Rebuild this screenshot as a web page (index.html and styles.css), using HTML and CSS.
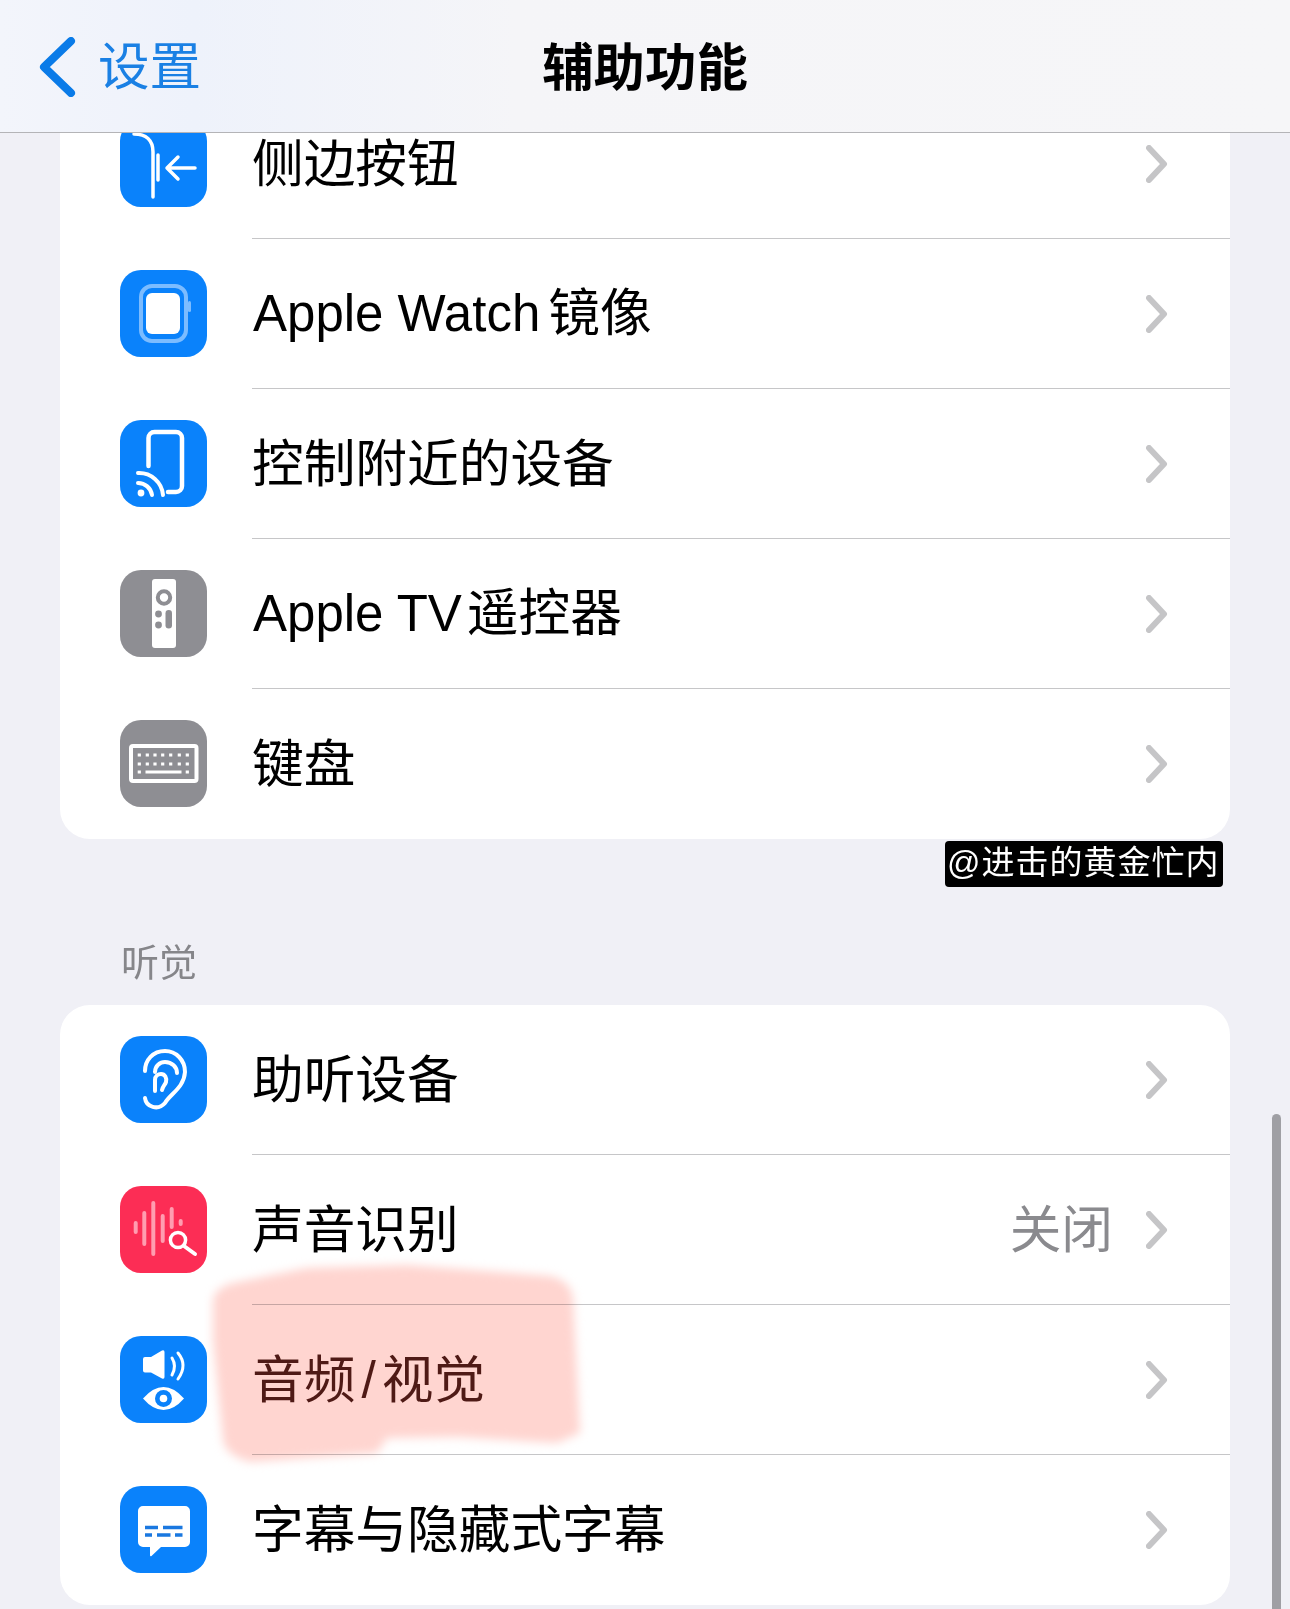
FILE: index.html
```html
<!DOCTYPE html>
<html lang="zh-CN">
<head>
<meta charset="utf-8">
<title>辅助功能</title>
<link rel="stylesheet" href="styles.css">
</head>
<body>
<div class="screen">
  <header class="nav">
    <div class="back">
      <svg class="back-chev" viewBox="0 0 40 60"><path d="M34 4 L7 30 L34 56"/></svg>
      <span class="back-label">设置</span>
    </div>
    <h1 class="title">辅助功能</h1>
  </header>

  <main class="content">
    <section class="card">
      <div class="row">
        <div class="tile blue"><svg viewBox="0 0 87 87"><g class="s-white s35"><path d="M14 14 C26 14 33 20 33 32 V77"/><path d="M38 35 V60"/><path d="M75 48 H47 M58 37 L47 48 L58 59"/></g></svg></div>
        <div class="body"><span class="label">侧边按钮</span><svg class="chev" viewBox="0 0 22 38"><path d="M3 3 L18 19 L3 35"/></svg></div>
      </div>
      <div class="row">
        <div class="tile blue"><svg viewBox="0 0 87 87"><rect x="21" y="16" width="45" height="55" rx="11" class="s-light s4"/><rect x="68" y="31" width="3" height="11" rx="1.5" class="f-light"/><rect x="26" y="23" width="34" height="41" rx="6" class="f-white"/></svg></div>
        <div class="body"><span class="label"><span class="lat">Apple Watch</span><span class="gap"></span>镜像</span><svg class="chev" viewBox="0 0 22 38"><path d="M3 3 L18 19 L3 35"/></svg></div>
      </div>
      <div class="row">
        <div class="tile blue"><svg viewBox="0 0 87 87"><path d="M28.5 46 V18 a6 6 0 0 1 6-6 H56 a6 6 0 0 1 6 6 V66 a6 6 0 0 1-6 6 H48" class="s-white s45"/><circle cx="21" cy="73" r="3.4" class="f-white"/><path d="M18 63 A14 14 0 0 1 32 75 M18 53 A24 24 0 0 1 43 75" class="s-white s4"/></svg></div>
        <div class="body"><span class="label">控制附近的设备</span><svg class="chev" viewBox="0 0 22 38"><path d="M3 3 L18 19 L3 35"/></svg></div>
      </div>
      <div class="row">
        <div class="tile grey"><svg viewBox="0 0 87 87"><rect x="32" y="9" width="24" height="69" rx="3" class="f-white"/><circle cx="44" cy="27.5" r="6.2" class="s-grey s4"/><circle cx="38.5" cy="44" r="3.4" class="f-grey"/><circle cx="38.5" cy="55" r="3.4" class="f-grey"/><rect x="45.5" y="40" width="6.5" height="18.5" rx="3.25" class="f-grey"/></svg></div>
        <div class="body"><span class="label"><span class="lat">Apple TV</span><span class="gap-s"></span>遥控器</span><svg class="chev" viewBox="0 0 22 38"><path d="M3 3 L18 19 L3 35"/></svg></div>
      </div>
      <div class="row">
        <div class="tile grey"><svg viewBox="0 0 87 87"><rect x="11" y="26" width="65.500" height="35" rx="2" class="s-white s4"/><path class="keys" d="M19.300 35h0M27.300 35h0M35 35h0M42.700 35h0M50.700 35h0M59.300 35h0M67.300 35h0M19.300 44h0M27.300 44h0M35 44h0M42.700 44h0M50.700 44h0M59.300 44h0M67.300 44h0M19.300 52h0M67.300 52h0"/><rect x="25.500" y="50.500" width="36" height="3" class="f-white"/></svg></div>
        <div class="body last"><span class="label">键盘</span><svg class="chev" viewBox="0 0 22 38"><path d="M3 3 L18 19 L3 35"/></svg></div>
      </div>
    </section>

    <h2 class="section-title">听觉</h2>

    <section class="card">
      <div class="row">
        <div class="tile blue"><svg viewBox="0 0 87 87"><g class="s-white s4"><path d="M25 62 C26 71 38 75 45 67 C50 58 64 52 65 36 C65 24 56 15 45 15 C33 15 25 24 25 35"/><path d="M35 36 C35 30 40 26 45 26 C52 26 57 31 57 37"/><path d="M35 55 V44 C35 40 38 38 41 38 C45 38 47 42 46 46 C45 49 43 50 42 54"/></g></svg></div>
        <div class="body"><span class="label">助听设备</span><svg class="chev" viewBox="0 0 22 38"><path d="M3 3 L18 19 L3 35"/></svg></div>
      </div>
      <div class="row">
        <div class="tile red"><svg viewBox="0 0 87 87"><path class="s-pink s4" d="M15.700 37V46M24.300 27V58M33.300 17V68M42.700 30V55M51.700 23V41M60.700 35V38"/><circle cx="58" cy="54" r="7.600" class="s-white s35 f-red"/><path class="s-white s4" d="M64 60 L75 68"/></svg></div>
        <div class="body"><span class="label">声音识别</span><span class="value">关闭</span><svg class="chev" viewBox="0 0 22 38"><path d="M3 3 L18 19 L3 35"/></svg></div>
      </div>
      <div class="row">
        <div class="tile blue"><svg viewBox="0 0 87 87"><path class="f-white" d="M25 21 H31 L42 14.500 Q44.500 13.500 44.500 16 V41 Q44.500 43.500 42 42.500 L31 36.500 H25 a2 2 0 0 1-2-2 V23 a2 2 0 0 1 2-2z"/><path class="s-white s3" d="M52 22 Q57 30 52 39 M58 17 Q68 29 58 43"/><path class="f-white" d="M23 62.500 Q33 51 43.500 51 Q54 51 64 62.500 Q54 74 43.500 74 Q33 74 23 62.500z"/><circle cx="43.500" cy="62.500" r="8.500" class="f-blue"/><circle cx="43.500" cy="62.500" r="3.800" class="f-white"/></svg></div>
        <div class="body"><span class="label hl">音频<span class="sl">/</span>视觉</span><svg class="chev" viewBox="0 0 22 38"><path d="M3 3 L18 19 L3 35"/></svg></div>
      </div>
      <div class="row">
        <div class="tile blue"><svg viewBox="0 0 87 87"><path class="f-white" d="M23 20 H65 a5 5 0 0 1 5 5 V56 a5 5 0 0 1-5 5 H41 L31.500 70 Q30 71 30 69 V61 H23 a5 5 0 0 1-5-5 V25 a5 5 0 0 1 5-5z"/><path class="s-cap" d="M25 41.500 H38 M43 41.500 H62.500 M25 49 H32 M37 49 H50.500 M55 49 H62.500"/></svg></div>
        <div class="body last"><span class="label">字幕与隐藏式字幕</span><svg class="chev" viewBox="0 0 22 38"><path d="M3 3 L18 19 L3 35"/></svg></div>
      </div>
    </section>
  </main>

  <div class="watermark">@进击的黄金忙内</div>
  <svg class="marker" viewBox="0 0 400 240"><path d="M23 60 Q25 48 43 43 L117 28 L217 25 L360 36 Q380 40 383 58 L390 193 L367 203 L267 197 L197 198 L187 213 L60 222 Q35 215 33 200 L23 100z"/></svg>
  <div class="scrollbar"></div>
</div>
</body>
</html>
```
FILE: styles.css
```css
* { box-sizing: border-box; }
html, body { margin: 0; padding: 0; }
body {
  background: #f0f0f6;
  font-family: "Liberation Sans", "Noto Sans CJK SC", sans-serif;
  color: #000;
}
.screen { position: relative; width: 1290px; height: 1609px; overflow: hidden; background: #f0f0f6; }

.nav {
  position: absolute; top: 0; left: 0; right: 0; height: 133px; z-index: 3;
  display: flex; align-items: center; justify-content: center;
  padding-top: 3px;
  background: linear-gradient(90deg, #f3f5fb 0%, #eef2fb 15%, #f5f5f8 40%, #f6f6f8 100%);
  border-bottom: 1px solid #b4b4b7;
}
.back { position: absolute; left: 37px; top: 37px; display: flex; align-items: center; gap: 21px; }
.back-chev { width: 40px; height: 60px; fill: none; stroke: #0a7be8; stroke-width: 8; stroke-linecap: round; stroke-linejoin: round; }
.back-label { font-size: 51.6px; line-height: 60px; color: #1a80e4; }
.title { margin: 0; font-size: 51.4px; line-height: 60px; font-weight: 700; }

.content { padding-top: 89px; }
.card { margin: 0 60px; background: #fff; border-radius: 30px; overflow: hidden; }
.section-title { margin: 0; height: 166px; padding: 97px 0 0 121px; font-size: 38px; line-height: 54px; font-weight: 400; color: #86868a; }

.row { display: flex; height: 150px; padding-left: 60px; align-items: flex-start; }
.tile { flex: none; width: 87px; height: 87px; margin-top: 31px; border-radius: 21px; }
.tile svg { display: block; width: 87px; height: 87px; }
.blue { background: #0a82fb; }
.grey { background: #8e8e93; }
.red { background: #fc2d55; }

.body {
  flex: 1; height: 150px; margin-left: 45px; padding-right: 62px;
  display: flex; align-items: center;
  border-bottom: 1px solid #c6c6c8;
}
.body.last { border-bottom: 0; }
.label { flex: 1; font-size: 51.7px; line-height: 60px; white-space: nowrap; }
.lat { font-size: 51px; margin-left: 1px; }
.gap { display: inline-block; width: 8px; }
.gap-s { display: inline-block; width: 5px; }
.sl { margin: 0 6px; }
.hl { color: #4f1f1a; }
.value { font-size: 51.7px; line-height: 60px; color: #8a8a8e; margin-right: 33px; }
.chev { flex: none; width: 22px; height: 38px; fill: none; stroke: #c5c5c7; stroke-width: 6; stroke-linecap: round; stroke-linejoin: round; }

.s-white, .s-light, .s-grey, .s-pink, .s-cap, .keys { fill: none; stroke-linecap: round; stroke-linejoin: round; }
.s-white { stroke: #fff; }
.s-light { stroke: #7cbcff; }
.s-grey { stroke: #8e8e93; }
.s-pink { stroke: #ff9db0; }
.s-cap { stroke: #1a78e0; stroke-width: 3.5; stroke-linecap: butt; }
.keys { stroke: #fff; stroke-width: 3.2; stroke-linecap: square; }
.s3 { stroke-width: 3; }
.s35 { stroke-width: 3.5; }
.s4 { stroke-width: 4; }
.s45 { stroke-width: 4.5; }
.f-white { fill: #fff; }
.f-light { fill: #7cbcff; }
.f-grey { fill: #8e8e93; }
.f-blue { fill: #0a82fb; }
.f-red { fill: #fc2d55; }

.watermark {
  position: absolute; left: 945px; top: 841px; width: 278px; height: 46px;
  padding-left: 2px;
  background: #000; color: #fff; border-radius: 4px; z-index: 2;
  font-size: 33px; line-height: 44px; white-space: nowrap; letter-spacing: 1px;
}
.marker {
  position: absolute; left: 190px; top: 1240px; width: 400px; height: 240px; z-index: 2;
  mix-blend-mode: multiply; filter: blur(5px);
}
.marker path { fill: #ffd5d0; }
.scrollbar { position: absolute; left: 1272px; top: 1114px; width: 9px; height: 500px; border-radius: 5px; background: #9f9fa4; z-index: 2; }
```
